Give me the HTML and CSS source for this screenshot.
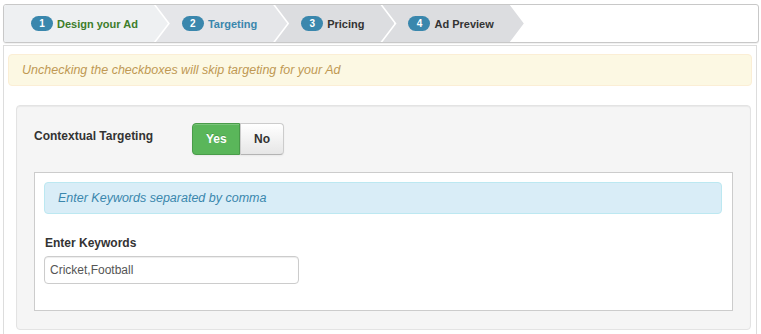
FILE: index.html
```html
<!DOCTYPE html>
<html lang="en">
<head>
    <meta charset="UTF-8">
    <title>Create Ad - Targeting</title>
    <link rel="stylesheet" href="styles.css">
</head>
<body>

    <div class="wizard">
        <div class="step done"><span class="badge">1</span>Design your Ad</div>
        <div class="step active"><span class="badge">2</span>Targeting</div>
        <div class="step"><span class="badge">3</span>Pricing</div>
        <div class="step"><span class="badge">4</span>Ad Preview</div>
    </div>

    <div class="panel">
        <div class="alert">Unchecking the checkboxes will skip targeting for your Ad</div>

        <div class="well">
            <div class="row">
                <label class="row-label">Contextual Targeting</label>
                <div class="btn-group">
                    <button class="btn btn-yes">Yes</button>
                    <button class="btn">No</button>
                </div>
            </div>

            <div class="box">
                <div class="alert alert-info">Enter Keywords separated by comma</div>
                <label class="field-label" for="keywords">Enter Keywords</label>
                <input id="keywords" type="text" value="Cricket,Football">
            </div>
        </div>
    </div>

</body>
</html>
```

FILE: styles.css
```css
body {
    font-family: "Liberation Sans", Arial, sans-serif;
    font-size: 13px;
    color: #333;
    background-color: #fff;
    margin: 0;
    padding: 4px 2px 0 3px;
}

.wizard {
    display: flex;
    height: 37px;
    border: 1px solid #c8c8c8;
    border-radius: 3px;
    background-color: #fff;
    overflow: hidden;
    box-shadow: 0 1px 1px rgba(0, 0, 0, 0.06);
}

.step {
    display: flex;
    align-items: center;
    padding: 0 30px 0 26px;
    margin-left: -12px;
    background-color: #dcdde0;
    font-size: 11px;
    font-weight: bold;
    color: #333;
    clip-path: polygon(0 0, calc(100% - 14px) 0, 100% 50%, calc(100% - 14px) 100%, 0 100%, 14px 50%);
}

.step:first-child {
    margin-left: 0;
    padding-left: 27px;
    clip-path: polygon(0 0, calc(100% - 14px) 0, 100% 50%, calc(100% - 14px) 100%, 0 100%);
}

.step.done {
    background-color: #eef0f2;
    color: #3d7d2a;
}

.step.active {
    background-color: #e5e6e9;
    color: #3a87ad;
}

.badge {
    display: inline-block;
    min-width: 22px;
    height: 15px;
    line-height: 15px;
    margin-right: 4px;
    border-radius: 8px;
    background-color: #3a87ad;
    color: #fff;
    font-size: 10px;
    text-align: center;
}

.panel {
    margin-top: 2px;
    border: 1px solid #ddd;
    border-bottom: none;
    padding: 8px 4px 4px 4px;
    margin-right: 2px;
}

.alert {
    padding: 8px 13px;
    line-height: 14px;
    background-color: #fcf8e3;
    border: 1px solid #fbeed5;
    border-radius: 4px;
    color: #c09853;
    font-style: italic;
    font-size: 12.5px;
}

.well {
    margin: 19px 0 0 8px;
    margin-right: 1px;
    padding: 17px 17px 18px 17px;
    background-color: #f5f5f5;
    border: 1px solid #e3e3e3;
    border-radius: 4px;
    box-shadow: inset 0 1px 1px rgba(0, 0, 0, 0.05);
}

.row {
    display: flex;
    align-items: flex-start;
}

.row-label {
    width: 158px;
    padding-top: 6px;
    font-size: 12px;
    font-weight: bold;
}

.btn-group {
    display: flex;
}

.btn {
    height: 32px;
    padding: 0 13px;
    font-family: inherit;
    font-size: 12px;
    font-weight: bold;
    color: #333;
    background: linear-gradient(#fff, #e6e6e6);
    border: 1px solid #ccc;
    border-bottom-color: #b3b3b3;
    border-radius: 0 4px 4px 0;
    box-shadow: inset 0 1px 0 rgba(255, 255, 255, 0.2), 0 1px 2px rgba(0, 0, 0, 0.05);
}

.btn-yes {
    width: 48px;
    color: #fff;
    background: #5ab65a;
    border-color: #4a9c4a;
    border-radius: 4px 0 0 4px;
    text-shadow: 0 -1px 0 rgba(0, 0, 0, 0.15);
}

.box {
    margin-top: 17px;
    padding: 9px 10px 26px 9px;
    background-color: #fff;
    border: 1px solid #ccc;
}

.alert-info {
    background-color: #d9edf7;
    border-color: #bce8f1;
    color: #3a87ad;
}

.field-label {
    display: block;
    margin: 22px 0 6px 1px;
    font-size: 12px;
    font-weight: bold;
}

input {
    width: 243px;
    height: 26px;
    padding: 0 5px;
    font-family: inherit;
    font-size: 12px;
    color: #555;
    border: 1px solid #ccc;
    border-radius: 4px;
    box-shadow: inset 0 1px 1px rgba(0, 0, 0, 0.075);
}
```
